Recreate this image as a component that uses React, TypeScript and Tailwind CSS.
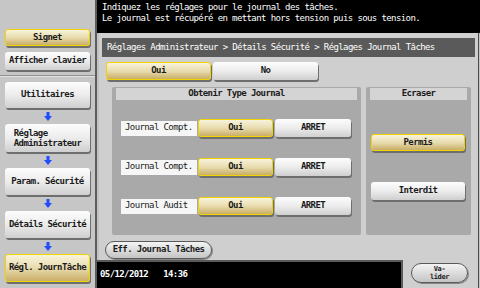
import React from 'react'

const font = "font-['DejaVu_Sans_Mono',monospace] text-[9px] tracking-[-0.6px]"
const btn = 'flex items-center justify-center rounded-[3px] bg-linear-to-b from-[#fdfdfd] via-[#ececec] to-[#cfcfcf] shadow-[1px_2px_0_#6e6e6e] text-[#1b1b1b] font-bold'
const yel = 'flex items-center justify-center rounded-[3px] bg-linear-to-b from-[#f8f3dc] via-[#e8dcae] to-[#c9ae66] border border-[#f0d400] shadow-[1px_2px_0_#6e6e6e] text-[#1b1b1b] font-bold'
const pill = 'flex items-center justify-center rounded-full bg-linear-to-b from-[#f4f4f4] to-[#c4c4c4] border border-[#5a5a5a] shadow-[1px_1px_0_#888] text-[#1b1b1b] font-bold'

function Arrow() {
  return (
    <div className="h-[16px] flex items-center justify-center">
      <svg width="8" height="9" viewBox="0 0 8 9">
        <rect x="2.5" y="0" width="3" height="4" fill="#1f4dff" />
        <polygon points="0,4 8,4 4,9" fill="#1f4dff" />
      </svg>
    </div>
  )
}

function Row({ label }: { label: string }) {
  return (
    <div className="flex items-center">
      <div className="w-[76px] h-[15px] bg-[#f6f6f6] flex items-center pl-[4px] text-[#1b1b1b]">{label}</div>
      <div className={`${yel} w-[75px] h-[18px] ml-[1px]`}>Oui</div>
      <div className={`${btn} w-[76px] h-[18px] ml-[2px]`}>ARRET</div>
    </div>
  )
}

export default function App() {
  return (
    <div className={`w-[480px] h-[288px] flex bg-[#c6c6c6] overflow-hidden ${font}`}>
      {/* side menu */}
      <aside className="w-[97px] shrink-0 flex flex-col pt-[29px] px-[5px] border-r-2 border-[#5c5c5c] bg-[#c6c6c6]">
        <div className={`${yel} w-[85px] h-[17px]`}>Signet</div>
        <div className={`${btn} w-[85px] h-[18px] mt-[6px]`}>Afficher clavier</div>
        <div className="-mx-[5px] mt-[5px] border-t border-[#8e8e8e] border-b border-b-[#e2e2e2]" />
        <div className={`${btn} w-[85px] h-[26px] mt-[5px]`}>Utilitaires</div>
        <Arrow />
        <div className={`${btn} w-[85px] h-[28px] leading-[10px]`}>
          <div className="text-left">Réglage<br />Administrateur</div>
        </div>
        <Arrow />
        <div className={`${btn} w-[85px] h-[27px]`}>Param. Sécurité</div>
        <Arrow />
        <div className={`${btn} w-[85px] h-[27px]`}>Détails Sécurité</div>
        <Arrow />
        <div className={`${yel} w-[85px] h-[28px]`}>Régl. JournTâche</div>
      </aside>

      <main className="flex-1 flex flex-col">
        <div className="h-[33px] bg-black text-white pl-[5px] pt-[2px] leading-[11px] shrink-0">
          <div>Indiquez les réglages pour le journal des tâches.</div>
          <div>Le journal est récupéré en mettant hors tension puis sous tension.</div>
        </div>

        <div className="flex-1 flex flex-col bg-[#cfcfcf] border-r border-[#4a4a4a] mr-[1px]">
          <div className="h-[227px] pt-[5px] px-[3px] border-l-2 border-[#c2c2c2]">
            <div className="h-[19px] bg-[#5a5a5a] text-white flex items-center pl-[5px]">
              Réglages Administrateur &gt; Détails Sécurité &gt; Réglages Journal Tâches
            </div>

            <div className="flex mt-[5px] pl-[4px] gap-[2px]">
              <div className={`${yel} w-[105px] h-[18px]`}>Oui</div>
              <div className={`${btn} w-[105px] h-[18px]`}>No</div>
            </div>

            <div className="flex mt-[7px] pl-[10px] gap-[5px]">
              <div className="w-[249px] h-[148px] bg-[#a9a9a9] rounded-[2px] pt-[1px] px-[4px]">
                <div className="h-[12px] bg-[#d4d4d4] flex items-center justify-center font-bold text-[#1b1b1b]">Obtenir Type Journal</div>
                <div className="flex flex-col gap-[21px] mt-[19px] pl-[5px]">
                  <Row label="Journal Compt." />
                  <Row label="Journal Compt." />
                  <Row label="Journal Audit" />
                </div>
              </div>
              <div className="w-[105px] h-[148px] bg-[#a9a9a9] rounded-[2px] pt-[1px] px-[4px]">
                <div className="h-[12px] bg-[#d4d4d4] flex items-center justify-center font-bold text-[#1b1b1b]">Ecraser</div>
                <div className={`${yel} w-[94px] h-[17px] ml-[1px] mt-[34px]`}>Permis</div>
                <div className={`${btn} w-[94px] h-[18px] ml-[1px] mt-[31px]`}>Interdit</div>
              </div>
            </div>

            <div className={`${pill} w-[107px] h-[18px] mt-[6px] ml-[3px]`}>Eff. Journal Tâches</div>
          </div>

          <div className="flex-1 flex">
            <div className="w-[306px] bg-black border-t-2 border-r-2 border-[#5a5a5a] text-white flex items-center pl-[3px] gap-[15px] font-bold">
              <span>05/12/2012</span>
              <span>14:36</span>
            </div>
            <div className="flex-1 pt-[3px] pl-[8px]">
              <div className={`${pill} w-[57px] h-[20px] flex-col text-[7px] leading-[8px] tracking-[-0.4px]`}>
                <span>Va-</span>
                <span>lider</span>
              </div>
            </div>
          </div>
        </div>
      </main>
    </div>
  )
}
